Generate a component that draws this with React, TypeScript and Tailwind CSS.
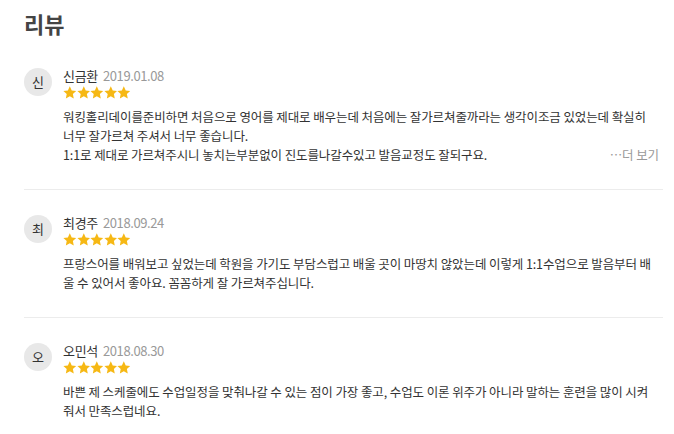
import React from "react";

const Star = () => (
  <svg width="13.6" height="13" viewBox="0 0 24 23" aria-hidden="true">
    <path
      d="M12 0.6l3.4 7.2 7.9.95-5.85 5.4 1.55 7.85L12 18.1l-7 3.9 1.55-7.85L.7 8.75l7.9-.95z"
      fill="#f6b814"
    />
  </svg>
);

const Stars = () => (
  <div className="flex mt-[2px] h-[13px] items-center">
    <Star />
    <Star />
    <Star />
    <Star />
    <Star />
  </div>
);

type Review = {
  initial: string;
  name: string;
  date: string;
  lines: string[];
  more?: boolean;
};

const reviews: Review[] = [
  {
    initial: "신",
    name: "신금환",
    date: "2019.01.08",
    lines: [
      "워킹홀리데이를준비하면 처음으로 영어를 제대로 배우는데 처음에는 잘가르쳐줄까라는 생각이조금 있었는데 확실히",
      "너무 잘가르쳐 주셔서 너무 좋습니다.",
      "1:1로 제대로 가르쳐주시니 놓치는부분없이 진도를나갈수있고 발음교정도 잘되구요.",
    ],
    more: true,
  },
  {
    initial: "최",
    name: "최경주",
    date: "2018.09.24",
    lines: [
      "프랑스어를 배워보고 싶었는데 학원을 가기도 부담스럽고 배울 곳이 마땅치 않았는데 이렇게 1:1수업으로 발음부터 배",
      "울 수 있어서 좋아요. 꼼꼼하게 잘 가르쳐주십니다.",
    ],
  },
  {
    initial: "오",
    name: "오민석",
    date: "2018.08.30",
    lines: [
      "바쁜 제 스케줄에도 수업일정을 맞춰나갈 수 있는 점이 가장 좋고, 수업도 이론 위주가 아니라 말하는 훈련을 많이 시켜",
      "줘서 만족스럽네요.",
    ],
  },
];

export default function App() {
  return (
    <div
      className="w-[674px] h-[434px] overflow-hidden bg-white pl-[24px] pr-[11px]"
      style={{ fontFamily: '"Noto Sans CJK KR", "Noto Sans", sans-serif' }}
    >
      <h2 className="mt-[8px] text-[22px] leading-[30px] font-bold text-[#444]">리뷰</h2>
      <div>
        {reviews.map((r, i) => (
          <div
            key={i}
            className={`flex items-start gap-[11px] border-b border-[#ececec] pb-[25px] ${
              i === 0 ? "pt-[30px]" : "pt-[25px]"
            }`}
          >
            <div className="w-[28px] h-[28px] shrink-0 rounded-full bg-[#e8e8e8] flex items-center justify-center text-[13px] text-[#333]">
              {r.initial}
            </div>
            <div className="flex-1 min-w-0">
              <div className="flex items-baseline gap-[5px] h-[16px] leading-[16px]">
                <span className="text-[13px] text-[#333] tracking-[-0.3px]">{r.name}</span>
                <span className="text-[13px] text-[#999] tracking-[-0.4px]">{r.date}</span>
              </div>
              <Stars />
              <div className="mt-[8px] text-[12.5px] leading-[19px] tracking-[-0.1px] text-[#333]">
                {r.lines.map((l, j) => {
                  const last = j === r.lines.length - 1;
                  if (last && r.more) {
                    return (
                      <div key={j} className="flex justify-between pr-[4px] whitespace-nowrap">
                        <span>{l}</span>
                        <span className="text-[#999]">⋯더 보기</span>
                      </div>
                    );
                  }
                  return (
                    <div key={j} className="whitespace-nowrap">
                      {l}
                    </div>
                  );
                })}
              </div>
            </div>
          </div>
        ))}
      </div>
    </div>
  );
}
